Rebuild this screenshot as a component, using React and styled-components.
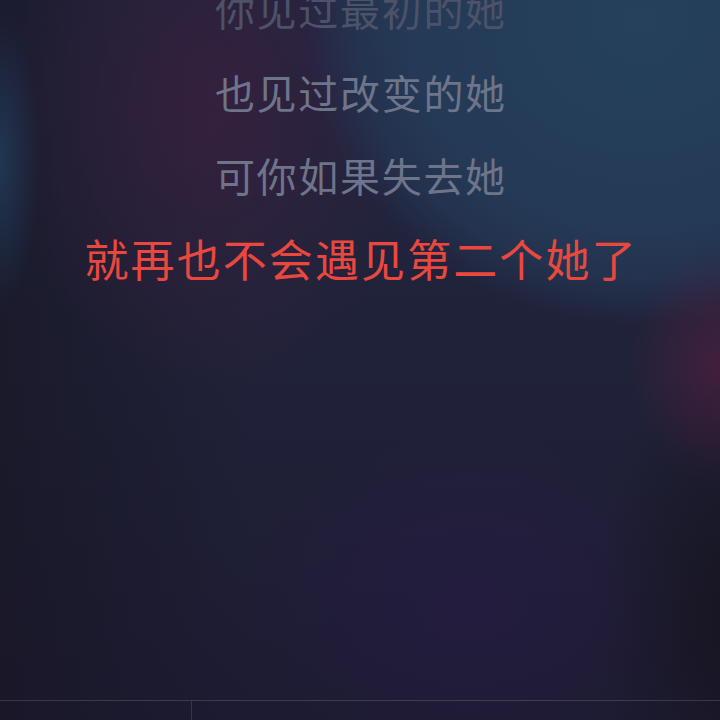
import React from "react";
import styled, { createGlobalStyle } from "styled-components";

const lyrics = [
  { text: "你见过最初的她", state: "past" },
  { text: "也见过改变的她", state: "near" },
  { text: "可你如果失去她", state: "near" },
  { text: "就再也不会遇见第二个她了", state: "current" },
];

function App() {
  return (
    <>
      <GlobalStyle />
      <Screen>
        <LyricList>
          {lyrics.map((line) => (
            <LyricLine key={line.text} state={line.state}>
              {line.text}
            </LyricLine>
          ))}
        </LyricList>
        <Footer>
          <FooterCell $w="192px" />
          <FooterCell />
        </Footer>
      </Screen>
    </>
  );
}

export default App;

const GlobalStyle = createGlobalStyle`
  html, body {
    margin: 0;
    padding: 0;
    background: #1b1a2a;
  }
  * {
    box-sizing: border-box;
  }
`;

// blurred album art behind the lyrics, built from soft gradients
const Screen = styled.div`
  width: 720px;
  height: 720px;
  overflow: hidden;
  display: flex;
  flex-direction: column;
  font-family: "Noto Sans CJK SC", "Noto Sans", sans-serif;
  background:
    radial-gradient(ellipse 40px 150px at 0px 160px, rgba(35, 74, 108, 0.6), transparent),
    radial-gradient(ellipse 90px 120px at 720px 365px, rgba(84, 30, 64, 0.65), transparent),
    radial-gradient(ellipse 130px 260px at 730px 610px, rgba(22, 20, 30, 0.85), transparent),
    radial-gradient(ellipse 230px 170px at 470px 600px, rgba(40, 27, 70, 0.6), transparent),
    radial-gradient(ellipse 420px 380px at 640px 20px, #25415b 0%, #243a56 55%, rgba(36, 52, 80, 0.9) 68%, transparent 80%),
    radial-gradient(ellipse 210px 280px at 210px 110px, rgba(56, 32, 62, 0.85), transparent),
    linear-gradient(90deg, rgba(22, 20, 32, 0.55) 0%, rgba(22, 20, 32, 0) 35%),
    linear-gradient(180deg, #212540 0%, #202239 50%, #1d1b32 100%);
`;

const LyricList = styled.div`
  display: flex;
  flex-direction: column;
  align-items: center;
  margin-top: -32px;
  flex: 1;
`;

const LyricLine = styled.div`
  height: 83px;
  line-height: 83px;
  white-space: nowrap;
  font-size: ${(p) => (p.state === "current" ? "44px" : "40px")};
  letter-spacing: ${(p) => (p.state === "current" ? "2.1px" : "1.7px")};
  padding-left: ${(p) => (p.state === "current" ? "2.1px" : "1.7px")};
  color: ${(p) =>
    p.state === "current"
      ? "#ea483e"
      : p.state === "past"
      ? "#4c5267"
      : "#6e7489"};
`;

const Footer = styled.div`
  display: flex;
  height: 20px;
  border-top: 1px solid rgba(255, 255, 255, 0.14);
`;

const FooterCell = styled.div`
  width: ${(p) => p.$w || "auto"};
  flex: ${(p) => (p.$w ? "none" : "1")};
  border-right: ${(p) => (p.$w ? "1px solid rgba(255, 255, 255, 0.12)" : "none")};
`;
